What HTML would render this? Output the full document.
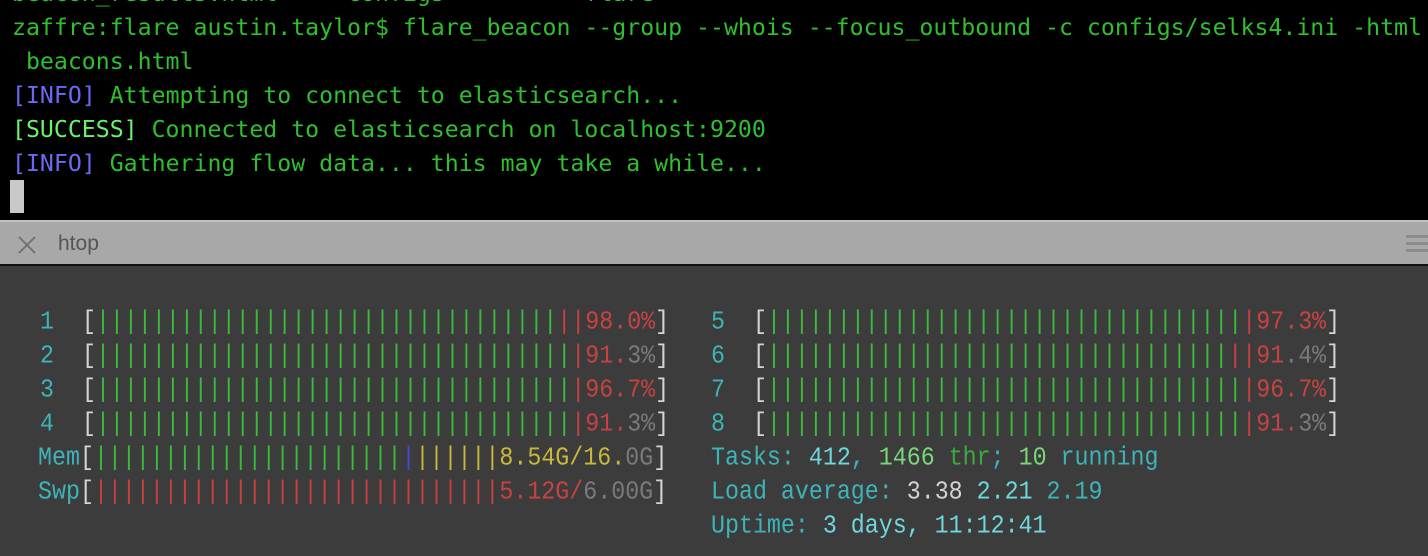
<!DOCTYPE html>
<html><head><meta charset="utf-8"><style>
*{margin:0;padding:0;box-sizing:border-box}
body{width:1428px;height:556px;overflow:hidden;background:#3c3c3c;position:relative;font-family:"Liberation Mono",monospace;font-size:23.3px}
#term{position:absolute;left:0;top:0;width:1428px;height:220px;background:#000;overflow:hidden;font-family:"DejaVu Sans Mono",monospace;font-size:23.2px}
.ln{position:absolute;left:12px;white-space:pre;line-height:34px;height:34px}
.g{color:#2fbf2f}.b{color:#6a6af5}.s{color:#6bf26b}
#tab{position:absolute;left:0;top:220px;width:1428px;height:44px;background:#a8a8a8;border-top:2px solid #c2c2c2}
#sep{position:absolute;left:0;top:264px;width:1428px;height:2px;background:#111}
.hl{position:absolute;white-space:pre;line-height:34px;height:34px;transform:scaleY(1.12)}
.c{color:#3db4b8}.w{color:#d4d4d4}.gb{color:#3cba3c}.r{color:#c84242}.gr{color:#7a7a7a}.y{color:#c9b83a}.bl{color:#4848d0}
.lc{color:#6fd8dc}.lg{color:#7ad87a}.dg{color:#3cab3c}
</style></head><body>
<div id="term">
<div class="ln g" style="top:-23px">beacon_results.html     configs          flare</div>
<div class="ln g" style="top:11px">zaffre:flare austin.taylor$ flare_beacon --group --whois --focus_outbound -c configs/selks4.ini -html</div>
<div class="ln g" style="top:45px"> beacons.html</div>
<div class="ln" style="top:79px"><span class="b">[INFO]</span><span class="g"> Attempting to connect to elasticsearch...</span></div>
<div class="ln" style="top:113px"><span class="s">[SUCCESS]</span><span class="g"> Connected to elasticsearch on localhost:9200</span></div>
<div class="ln" style="top:147px"><span class="b">[INFO]</span><span class="g"> Gathering flow data... this may take a while...</span></div>
<div style="position:absolute;left:10px;top:180px;width:14px;height:33px;background:#c8c8c8"></div>
</div>
<div id="tab">
<svg style="position:absolute;left:18px;top:14px" width="18" height="18"><path d="M1 1L17 17M17 1L1 17" stroke="#6e6e6e" stroke-width="1.8"/></svg>
<div style="position:absolute;left:58px;top:10px;font-family:'Liberation Sans',sans-serif;font-size:21px;color:#555">htop</div>
<div style="position:absolute;left:1406px;top:13px;width:22px;height:3px;background:#8c8c8c"></div>
<div style="position:absolute;left:1406px;top:20px;width:22px;height:3px;background:#8c8c8c"></div>
<div style="position:absolute;left:1406px;top:27px;width:22px;height:3px;background:#8c8c8c"></div>
</div>
<div id="sep"></div>

<div class="hl" style="left:40px;top:305px"><span class="c">1</span>  <span class="w">[</span><span class="gb">|||||||||||||||||||||||||||||||||</span><span class="r">||98.0%</span><span class="w">]</span></div>
<div class="hl" style="left:40px;top:339px"><span class="c">2</span>  <span class="w">[</span><span class="gb">||||||||||||||||||||||||||||||||||</span><span class="r">|91.</span><span class="gr">3%</span><span class="w">]</span></div>
<div class="hl" style="left:40px;top:373px"><span class="c">3</span>  <span class="w">[</span><span class="gb">||||||||||||||||||||||||||||||||||</span><span class="r">|96.7%</span><span class="w">]</span></div>
<div class="hl" style="left:40px;top:407px"><span class="c">4</span>  <span class="w">[</span><span class="gb">||||||||||||||||||||||||||||||||||</span><span class="r">|91.</span><span class="gr">3%</span><span class="w">]</span></div>
<div class="hl" style="left:38px;top:441px"><span class="c">Mem</span><span class="w">[</span><span class="gb">||||||||||||||||||||||</span><span class="bl">|</span><span class="y">||||||8.54G/16.</span><span class="gr">0G</span><span class="w">]</span></div>
<div class="hl" style="left:38px;top:475px"><span class="c">Swp</span><span class="w">[</span><span class="r">|||||||||||||||||||||||||||||5.12G/</span><span class="gr">6.00G</span><span class="w">]</span></div>

<div class="hl" style="left:711px;top:305px"><span class="c">5</span>  <span class="w">[</span><span class="gb">||||||||||||||||||||||||||||||||||</span><span class="r">|97.3%</span><span class="w">]</span></div>
<div class="hl" style="left:711px;top:339px"><span class="c">6</span>  <span class="w">[</span><span class="gb">|||||||||||||||||||||||||||||||||</span><span class="r">||91</span><span class="gr">.4%</span><span class="w">]</span></div>
<div class="hl" style="left:711px;top:373px"><span class="c">7</span>  <span class="w">[</span><span class="gb">||||||||||||||||||||||||||||||||||</span><span class="r">|96.7%</span><span class="w">]</span></div>
<div class="hl" style="left:711px;top:407px"><span class="c">8</span>  <span class="w">[</span><span class="gb">||||||||||||||||||||||||||||||||||</span><span class="r">|91.</span><span class="gr">3%</span><span class="w">]</span></div>
<div class="hl" style="left:711px;top:441px"><span class="c">Tasks: </span><span class="lc">412</span><span class="c">, </span><span class="lg">1466</span><span class="dg"> thr</span><span class="c">; </span><span class="lg">10</span><span class="c"> running</span></div>
<div class="hl" style="left:711px;top:475px"><span class="c">Load average: </span><span class="w">3.38 </span><span class="lc">2.21 </span><span class="c">2.19</span></div>
<div class="hl" style="left:711px;top:509px"><span class="c">Uptime: </span><span class="lc">3 days, 11:12:41</span></div>
</body></html>
